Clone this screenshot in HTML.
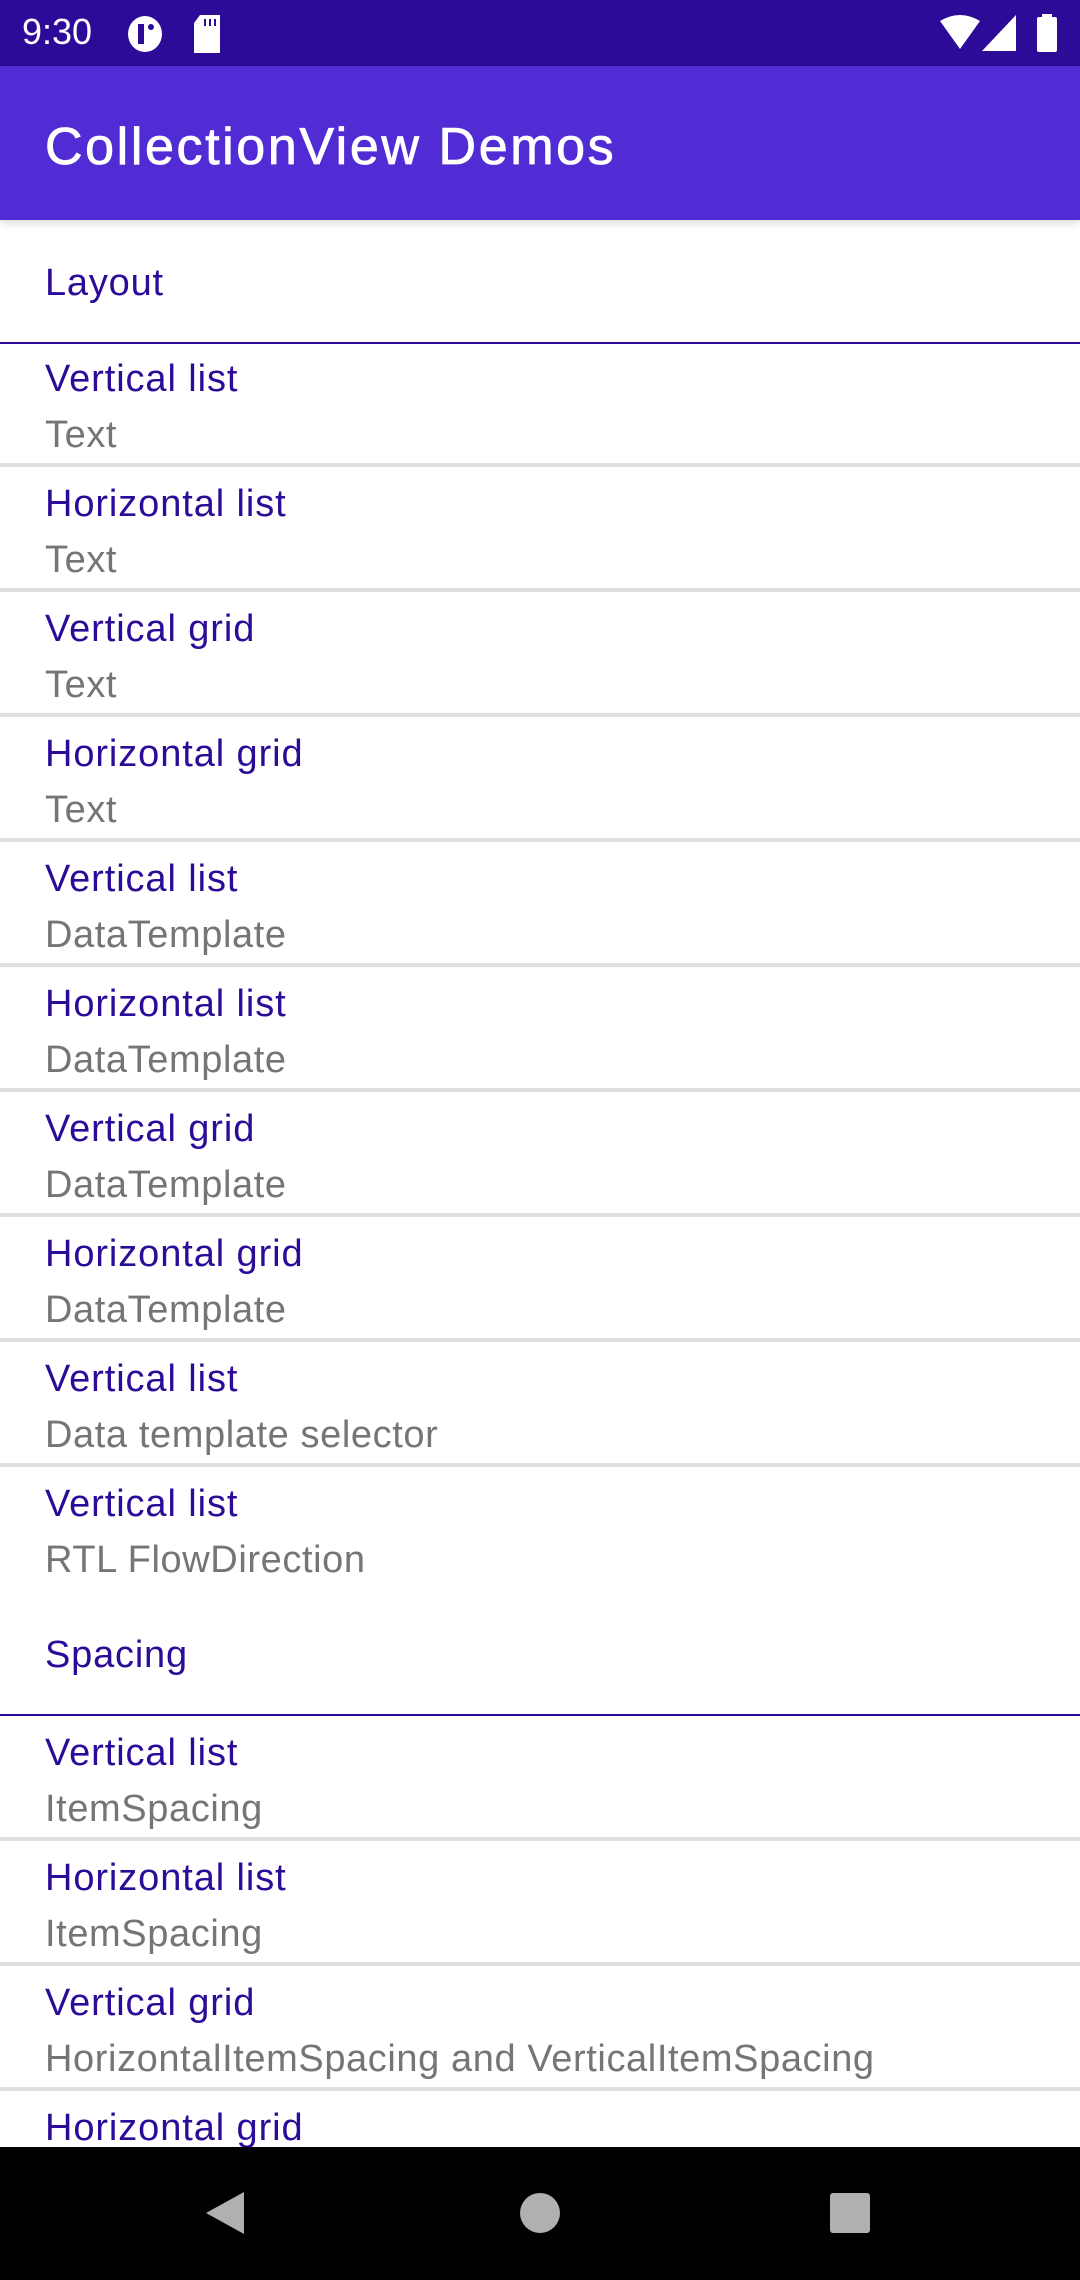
<!DOCTYPE html>
<html><head><meta charset="utf-8"><style>
*{margin:0;padding:0;box-sizing:border-box}
body{width:1080px;height:2280px;overflow:hidden;background:#fff;font-family:"Liberation Sans",sans-serif;position:relative}
.sb{position:absolute;left:0;top:0;width:1080px;height:66px;background:#2b0b98}
.ab{position:absolute;left:0;top:66px;width:1080px;height:154px;background:#512bd4;box-shadow:0 3px 8px rgba(0,0,0,.15)}
.t{position:absolute;left:45px;color:#fff;font-size:52px;line-height:52px;top:55px;letter-spacing:2.6px;-webkit-text-stroke:0.8px #fff}
.hd{position:absolute;left:0;width:1080px;height:124px;border-bottom:2px solid #2b0b98}
.hd span{position:absolute;left:45px;top:44px;font-size:38px;line-height:38px;color:#2b0b98;letter-spacing:0.8px}
.it{position:absolute;left:0;width:1080px;height:125px}
.it.s{border-bottom:4px solid #e0e0e0}
.it .a{position:absolute;left:45px;top:18px;font-size:38px;line-height:38px;color:#2b0b98;white-space:nowrap;letter-spacing:0.9px}
.it .b{position:absolute;left:45px;top:74px;font-size:38px;line-height:38px;color:#757575;white-space:nowrap;letter-spacing:0.6px}
.nav{position:absolute;left:0;top:2147px;width:1080px;height:133px;background:#000}
</style></head><body>
<div class="sb">
<div style="position:absolute;left:22px;top:12px;color:#fff;font-size:36px;line-height:40px">9:30</div>
<svg style="position:absolute;left:126px;top:14px" width="38" height="40" viewBox="0 0 38 40"><ellipse cx="19" cy="20" rx="17" ry="18" fill="#fff"/><rect x="12" y="10" width="6" height="20" fill="#2b0b98"/><circle cx="25" cy="13" r="3" fill="#2b0b98"/></svg>
<svg style="position:absolute;left:192px;top:15px" width="30" height="38" viewBox="0 0 30 38"><path d="M8 0H28V38H2V8Z" fill="#fff"/><rect x="12" y="4" width="2" height="7" fill="#2b0b98"/><rect x="17" y="4" width="2" height="7" fill="#2b0b98"/><rect x="22" y="4" width="2" height="7" fill="#2b0b98"/></svg>
<svg style="position:absolute;left:940px;top:15px" width="40" height="36" viewBox="0 0 40 36"><path d="M0 6Q20 -6 40 6L20 34Z" fill="#fff"/></svg>
<svg style="position:absolute;left:982px;top:15px" width="36" height="36" viewBox="0 0 36 36"><path d="M34 0V36H0Z" fill="#fff"/></svg>
<svg style="position:absolute;left:1036px;top:14px" width="22" height="38" viewBox="0 0 22 38"><rect x="6" y="0" width="10" height="4" fill="#fff"/><rect x="1" y="3" width="20" height="35" rx="2" fill="#fff"/></svg>
</div>
<div class="ab"><div class="t">CollectionView Demos</div></div>

<div class="hd" style="top:220px"><span>Layout</span></div>
<div class="it s" style="top:342px"><div class="a">Vertical list</div><div class="b">Text</div></div>
<div class="it s" style="top:467px"><div class="a">Horizontal list</div><div class="b">Text</div></div>
<div class="it s" style="top:592px"><div class="a">Vertical grid</div><div class="b">Text</div></div>
<div class="it s" style="top:717px"><div class="a">Horizontal grid</div><div class="b">Text</div></div>
<div class="it s" style="top:842px"><div class="a">Vertical list</div><div class="b">DataTemplate</div></div>
<div class="it s" style="top:967px"><div class="a">Horizontal list</div><div class="b">DataTemplate</div></div>
<div class="it s" style="top:1092px"><div class="a">Vertical grid</div><div class="b">DataTemplate</div></div>
<div class="it s" style="top:1217px"><div class="a">Horizontal grid</div><div class="b">DataTemplate</div></div>
<div class="it s" style="top:1342px"><div class="a">Vertical list</div><div class="b">Data template selector</div></div>
<div class="it" style="top:1467px"><div class="a">Vertical list</div><div class="b">RTL FlowDirection</div></div>

<div class="hd" style="top:1592px"><span>Spacing</span></div>
<div class="it s" style="top:1716px"><div class="a">Vertical list</div><div class="b">ItemSpacing</div></div>
<div class="it s" style="top:1841px"><div class="a">Horizontal list</div><div class="b">ItemSpacing</div></div>
<div class="it s" style="top:1966px"><div class="a">Vertical grid</div><div class="b">HorizontalItemSpacing and VerticalItemSpacing</div></div>
<div class="it" style="top:2091px"><div class="a">Horizontal grid</div><div class="b">HorizontalItemSpacing</div></div>

<div class="nav">
<svg style="position:absolute;left:204px;top:43px" width="42" height="46" viewBox="0 0 42 46"><path d="M40 2V44L2 23Z" fill="#b0b0b0"/></svg>
<svg style="position:absolute;left:519px;top:45px" width="42" height="42"><circle cx="21" cy="21" r="20" fill="#b0b0b0"/></svg>
<svg style="position:absolute;left:829px;top:45px" width="42" height="42"><rect x="1" y="1" width="40" height="40" rx="3" fill="#b0b0b0"/></svg>
</div>
</body></html>
